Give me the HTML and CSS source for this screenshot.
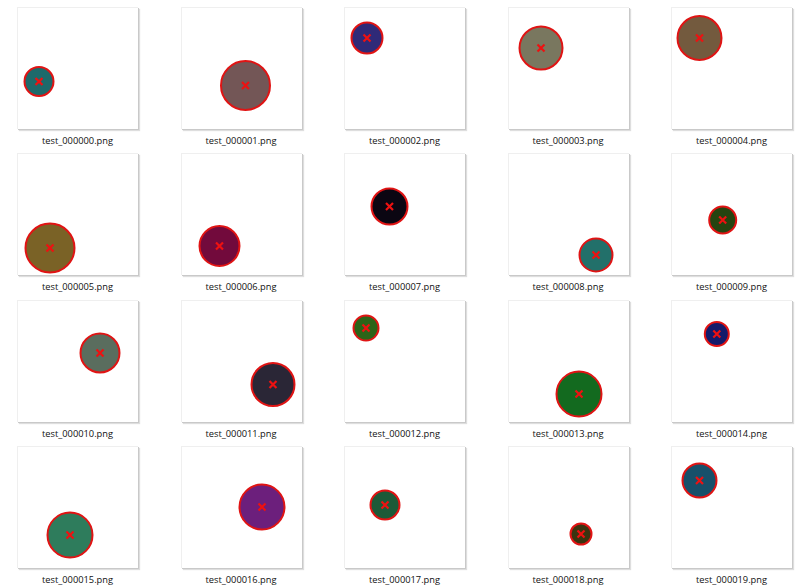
FILE: index.html
```html
<!DOCTYPE html>
<html>
<head>
<meta charset="utf-8">
<link rel="stylesheet" href="styles.css">
</head>
<body>
<div class="grid">
  <div class="item"><div class="thumb"><svg width="121" height="122"><circle cx="22" cy="74.5" r="14.5" fill="#1d6a6b"/><path d="M18.5 71l7 7M25.5 71l-7 7"/></svg></div><div class="label">test_000000.png</div></div>
  <div class="item"><div class="thumb"><svg width="121" height="122"><circle cx="64.5" cy="78.5" r="24.5" fill="#735656"/><path d="M61 75l7 7M68 75l-7 7"/></svg></div><div class="label">test_000001.png</div></div>
  <div class="item"><div class="thumb"><svg width="121" height="122"><circle cx="23" cy="31" r="15.5" fill="#2f2a78"/><path d="M19.5 27.5l7 7M26.5 27.5l-7 7"/></svg></div><div class="label">test_000002.png</div></div>
  <div class="item"><div class="thumb"><svg width="121" height="122"><circle cx="33" cy="41" r="21.5" fill="#79775f"/><path d="M29.5 37.5l7 7M36.5 37.5l-7 7"/></svg></div><div class="label">test_000003.png</div></div>
  <div class="item"><div class="thumb"><svg width="121" height="122"><circle cx="28.5" cy="31" r="22" fill="#735a3e"/><path d="M25 27.5l7 7M32 27.5l-7 7"/></svg></div><div class="label">test_000004.png</div></div>

  <div class="item"><div class="thumb"><svg width="121" height="122"><circle cx="33" cy="95" r="24.5" fill="#7a6226"/><path d="M29.5 91.5l7 7M36.5 91.5l-7 7"/></svg></div><div class="label">test_000005.png</div></div>
  <div class="item"><div class="thumb"><svg width="121" height="122"><circle cx="38.5" cy="93" r="20" fill="#720a3c"/><path d="M35 89.5l7 7M42 89.5l-7 7"/></svg></div><div class="label">test_000006.png</div></div>
  <div class="item"><div class="thumb"><svg width="121" height="122"><circle cx="45.5" cy="53.5" r="18" fill="#0b0612"/><path d="M42 50l7 7M49 50l-7 7"/></svg></div><div class="label">test_000007.png</div></div>
  <div class="item"><div class="thumb"><svg width="121" height="122"><circle cx="88" cy="102" r="16.5" fill="#22706a"/><path d="M84.5 98.5l7 7M91.5 98.5l-7 7"/></svg></div><div class="label">test_000008.png</div></div>
  <div class="item"><div class="thumb"><svg width="121" height="122"><circle cx="51.7" cy="67" r="13.5" fill="#254410"/><path d="M48.2 63.5l7 7M55.2 63.5l-7 7"/></svg></div><div class="label">test_000009.png</div></div>

  <div class="item"><div class="thumb"><svg width="121" height="122"><circle cx="83" cy="53" r="19.5" fill="#5a6d5e"/><path d="M79.5 49.5l7 7M86.5 49.5l-7 7"/></svg></div><div class="label">test_000010.png</div></div>
  <div class="item"><div class="thumb"><svg width="121" height="122"><circle cx="92" cy="84.5" r="21.5" fill="#2a2636"/><path d="M88.5 81l7 7M95.5 81l-7 7"/></svg></div><div class="label">test_000011.png</div></div>
  <div class="item"><div class="thumb"><svg width="121" height="122"><circle cx="22" cy="28" r="12.5" fill="#2c6418"/><path d="M18.5 24.5l7 7M25.5 24.5l-7 7"/></svg></div><div class="label">test_000012.png</div></div>
  <div class="item"><div class="thumb"><svg width="121" height="122"><circle cx="71" cy="94" r="22.5" fill="#136a1f"/><path d="M67.5 90.5l7 7M74.5 90.5l-7 7"/></svg></div><div class="label">test_000013.png</div></div>
  <div class="item"><div class="thumb"><svg width="121" height="122"><circle cx="45.8" cy="34" r="12" fill="#141a6a"/><path d="M42.3 30.5l7 7M49.3 30.5l-7 7"/></svg></div><div class="label">test_000014.png</div></div>

  <div class="item"><div class="thumb"><svg width="121" height="122"><circle cx="53" cy="89" r="22.5" fill="#2e7c5c"/><path d="M49.5 85.5l7 7M56.5 85.5l-7 7"/></svg></div><div class="label">test_000015.png</div></div>
  <div class="item"><div class="thumb"><svg width="121" height="122"><circle cx="81" cy="61" r="22.5" fill="#6c1f7c"/><path d="M77.5 57.5l7 7M84.5 57.5l-7 7"/></svg></div><div class="label">test_000016.png</div></div>
  <div class="item"><div class="thumb"><svg width="121" height="122"><circle cx="41" cy="59" r="14.5" fill="#1c5a38"/><path d="M37.5 55.5l7 7M44.5 55.5l-7 7"/></svg></div><div class="label">test_000017.png</div></div>
  <div class="item"><div class="thumb"><svg width="121" height="122"><circle cx="73" cy="88" r="10.5" fill="#3a3410"/><path d="M69.5 84.5l7 7M76.5 84.5l-7 7"/></svg></div><div class="label">test_000018.png</div></div>
  <div class="item"><div class="thumb"><svg width="121" height="122"><circle cx="28.5" cy="34.5" r="17" fill="#17506a"/><path d="M25 31l7 7M32 31l-7 7"/></svg></div><div class="label">test_000019.png</div></div>
</div>
</body>
</html>
```
FILE: styles.css
```css
html, body {
  margin: 0;
  padding: 0;
  background: #ffffff;
}
body {
  font-family: "Open Sans", "Noto Sans", "Liberation Sans", sans-serif;
  color: #1a1a1a;
  width: 800px;
  height: 588px;
  overflow: hidden;
}
.grid {
  display: grid;
  grid-template-columns: repeat(5, 121px);
  column-gap: 42.5px;
  row-gap: 0.3px;
  padding: 7px 0 0 17px;
}
.item {
  display: flex;
  flex-direction: column;
  align-items: center;
}
.thumb {
  width: 121px;
  height: 122px;
  box-sizing: border-box;
  background: #ffffff;
  border-left: 1px solid #efefef;
  border-top: 1px solid #efefef;
  box-shadow: 1px 1px 0 #c9c9c9, 2px 2px 1px #dedede;
  overflow: hidden;
}
.thumb svg {
  display: block;
  margin: -1px 0 0 -1px;
}
.thumb circle {
  stroke: #e01414;
  stroke-width: 2;
}
.thumb path {
  stroke: #ee1111;
  stroke-width: 2.2;
  fill: none;
}
.label {
  font-size: 9.3px;
  line-height: 24px;
  height: 24px;
  white-space: nowrap;
  color: #111111;
}
```
